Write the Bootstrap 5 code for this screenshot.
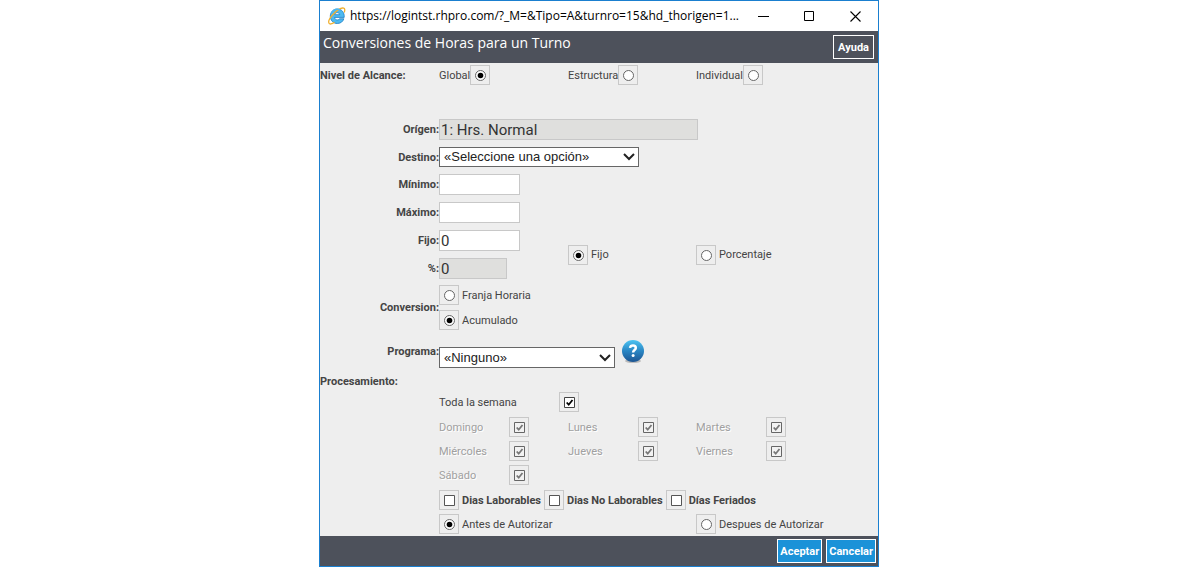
<!DOCTYPE html>
<html lang="es">
<head>
<meta charset="utf-8">
<meta name="viewport" content="width=device-width, initial-scale=1">
<title>Conversiones de Horas para un Turno</title>
<link href="https://cdn.jsdelivr.net/npm/bootstrap@5.3.0/dist/css/bootstrap.min.css" rel="stylesheet">
<style>
  body { padding-right: 2px; font-family: Roboto, "Open Sans", sans-serif; font-size: 11px; line-height: 16px; color: #444; background: #fff; }
  .dialog-window { max-width: 560px; border: 1px solid #1a7fcf; background: #eee; }
  .window-bar { height: 30px; padding-left: 8px; background: #fff; color: #000; font: 12px/30px "Open Sans", sans-serif; }
  .window-bar svg { display: block; }
  .window-btn { width: 46px; height: 28px; padding: 0; border: 0; background: none; display: flex; align-items: center; justify-content: center; }
  .bar-dark { background: #4d515b; color: #fff; }
  .bar-top { padding: 0 4px 0 3px; height: 32px; }
  .bar-top h1 { margin: 0; font: 14px/24px "Open Sans", sans-serif; }
  .bar-bottom { padding: 3px 2px; height: 30px; gap: 4px; }
  .tool-btn { height: 24px; padding: 2px 4px 0; border: 1px solid #fff; border-radius: 0; color: #fff; font: 700 11px/20px Roboto, sans-serif; background: transparent; }
  .tool-btn.main-btn { padding: 2px 2px 0; background: #1b92d8; }
  .tool-btn:hover { background: #137ab8; color: #fff; }

  form { padding-bottom: 2px; }
  .line { display: grid; grid-template-columns: 119px 129px 128px 1fr; align-items: center; min-height: 20px; }
  .line > .wide { grid-column: 2 / -1; }
  .two-cols { grid-column: span 2; }
  .scope { margin: 2px 0 34px; }
  .stack { display: grid; row-gap: 7px; }
  .days { row-gap: 4px; }
  .days + .days { margin-top: 5px; }
  .tick-group { gap: 3px; }
  label, .lead-label, .section-label { padding-top: 1px; }
  .lead-label { font-weight: 700; text-align: right; }
  .section-label { font-weight: 700; text-align: left; }
  .amount-label { width: 119px; }
  .amount-mode { width: 128px; }
  .amount-mode:nth-child(2) { margin-left: 48px; }
  .conversion { margin-top: 6px; }
  .conversion .wide { row-gap: 5px; }
  .program { margin-top: 10px; }
  .program .wide { gap: 6px; height: 28px; }
  .processing { margin-top: 4px; line-height: 18px; height: 18px; }
  .week { margin: 2px 0 5px; }

  .tick { appearance: none; flex: none; display: block; width: 20px; height: 20px; margin: 0; border: 1px solid #c8c8c8; background: center / 18px 18px no-repeat; }
  .tick[type=radio] { background-image: url("data:image/svg+xml,%3Csvg xmlns='http://www.w3.org/2000/svg' viewBox='0 0 18 18'%3E%3Ccircle cx='9.500' cy='9.500' r='5' fill='%23fff' stroke='%23666'/%3E%3C/svg%3E"); }
  .tick[type=radio]:checked { background-image: url("data:image/svg+xml,%3Csvg xmlns='http://www.w3.org/2000/svg' viewBox='0 0 18 18'%3E%3Ccircle cx='9.500' cy='9.500' r='5' fill='%23fff' stroke='%23666'/%3E%3Ccircle cx='9.500' cy='9.500' r='2.800' fill='%23000'/%3E%3C/svg%3E"); }
  .tick[type=checkbox] { background-image: url("data:image/svg+xml,%3Csvg xmlns='http://www.w3.org/2000/svg' viewBox='0 0 18 18'%3E%3Cpath d='M4.500 4.500h10v10h-10z' fill='%23fff' stroke='%23555'/%3E%3C/svg%3E"); }
  .tick[type=checkbox]:checked { background-image: url("data:image/svg+xml,%3Csvg xmlns='http://www.w3.org/2000/svg' viewBox='0 0 18 18'%3E%3Cpath d='M4.500 4.500h10v10h-10z' fill='%23fff' stroke='%23444'/%3E%3Cpath d='M6.700 9.500l2 2.200 3.800-4.700' fill='none' stroke='%23000' stroke-width='1.800'/%3E%3C/svg%3E"); }
  .tick[type=checkbox]:disabled { background-image: url("data:image/svg+xml,%3Csvg xmlns='http://www.w3.org/2000/svg' viewBox='0 0 18 18'%3E%3Cpath d='M4.500 4.500h10v10h-10z' fill='%23f2f2f2' stroke='%23666'/%3E%3Cpath d='M6.700 9.500l2 2.200 3.800-4.700' fill='none' stroke='%23777' stroke-width='1.800'/%3E%3C/svg%3E"); }
  .day-label { width: 70px; color: #a0a0a0; text-shadow: 1px 1px 0 #fff; }
  .week-label { width: 120px; }

  .entry { height: 21px; min-height: 0; width: 81px; padding: 0 1px; border: 1px solid #c8c8c8; border-radius: 0; color: #333; font: 15px/19px Roboto, sans-serif; background: #fff; }
  .entry:disabled { background: #dfdfdd; color: #333; opacity: 1; }
  .entry-origin { width: 259px; }
  .entry-percent { width: 68px; }
  .picker { height: 20px; padding: 0 20px 0 4px; border: 1px solid #666; border-radius: 0; color: #222; font: 13px/18px "Liberation Sans", sans-serif; background: #fff url("data:image/svg+xml,%3Csvg xmlns='http://www.w3.org/2000/svg' viewBox='0 0 12 8'%3E%3Cpath d='M1 1l5 5 5-5' fill='none' stroke='%23222' stroke-width='2'/%3E%3C/svg%3E") right 3px center / 12px 8px no-repeat; }
  .picker-target { width: 200px; }
  .picker-program { width: 176px; height: 21px; line-height: 19px; }
  .help-btn { width: 24px; height: 24px; padding: 0; border: 0; background: none; }
  .help-btn svg { display: block; }
</style>
</head>
<body>
<main class="dialog-window mx-auto">
  <header class="window-bar d-flex align-items-center">
    <svg width="18" height="18" viewBox="0 0 18 18" aria-hidden="true">
      <path d="M9.300 2C5.200 2 2.300 5.200 2.300 9.200c0 4.200 3 7.300 7 7.300 3.200 0 5.600-1.800 6.600-4.700h-4.300c-.5.700-1.200 1.100-2.200 1.100-1.600 0-2.700-1-2.800-2.500h9.600C16.600 5.400 13.600 2 9.300 2zM6.700 7.700C7 6.400 7.900 5.600 9.200 5.600s2.300.8 2.500 2.100z" fill="#4db9f0" stroke="#1c7cc4" stroke-width=".8"/>
      <path d="M6.500 15.200C3.800 17.200 1.700 17.500 1 16.200.1 14.500 1.800 10.900 5 7.500 8.900 3.300 13.600.400 15.700 1.200c1.400.5 1.300 2.400.5 4.300" fill="none" stroke="#f0b030" stroke-width="1.300"/>
      <path d="M3.300 6.500C4.400 3.800 6.600 2.200 9.300 2.200c1 0 1.900.2 2.700.5" fill="none" stroke="#4db9f0" stroke-width="1.200"/>
    </svg>
    <span class="ms-1 me-auto text-nowrap overflow-hidden">https://logintst.rhpro.com/?_M=&amp;Tipo=A&amp;turnro=15&amp;hd_thorigen=1...</span>
    <button class="window-btn" type="button" aria-label="Minimizar"><svg width="11" height="11"><path d="M0 5.500h11" stroke="#000"/></svg></button>
    <button class="window-btn" type="button" aria-label="Maximizar"><svg width="11" height="11"><path d="M.5.500h9v9h-9z" fill="none" stroke="#000"/></svg></button>
    <button class="window-btn" type="button" aria-label="Cerrar"><svg width="11" height="11"><path d="M.5.500l10 10M10.500.500l-10 10" stroke="#000" stroke-width="1.100"/></svg></button>
  </header>

  <div class="bar-dark bar-top d-flex justify-content-between">
    <h1>Conversiones de Horas para un Turno</h1>
    <button class="btn tool-btn align-self-center" type="button">Ayuda</button>
  </div>

  <form>
    <div class="line scope" role="radiogroup" aria-label="Nivel de Alcance">
      <span class="section-label">Nivel de Alcance:</span>
      <div class="d-flex align-items-center"><label for="global">Global</label><input class="tick" type="radio" name="alcance" id="global" checked></div>
      <div class="d-flex align-items-center"><label for="estructura">Estructura</label><input class="tick" type="radio" name="alcance" id="estructura"></div>
      <div class="d-flex align-items-center"><label for="individual">Individual</label><input class="tick" type="radio" name="alcance" id="individual"></div>
    </div>

    <div class="stack">
      <div class="line"><label class="lead-label" for="origen">Orígen:</label><div class="wide"><input class="form-control entry entry-origin" id="origen" value="1: Hrs. Normal" disabled></div></div>
      <div class="line"><label class="lead-label" for="destino">Destino:</label><div class="wide"><select class="form-select picker picker-target" id="destino"><option>«Seleccione una opción»</option></select></div></div>
      <div class="line"><label class="lead-label" for="minimo">Mínimo:</label><div class="wide"><input class="form-control entry" id="minimo"></div></div>
      <div class="line"><label class="lead-label" for="maximo">Máximo:</label><div class="wide"><input class="form-control entry" id="maximo"></div></div>
      <div class="d-flex align-items-center">
        <div class="stack">
          <div class="d-flex align-items-center"><label class="lead-label amount-label" for="fijo">Fijo:</label><input class="form-control entry" id="fijo" value="0"></div>
          <div class="d-flex align-items-center"><label class="lead-label amount-label" for="porciento">%:</label><input class="form-control entry entry-percent" id="porciento" value="0" disabled></div>
        </div>
        <div class="d-flex align-items-center tick-group amount-mode"><input class="tick" type="radio" name="modo" id="modo-fijo" checked><label for="modo-fijo">Fijo</label></div>
        <div class="d-flex align-items-center tick-group amount-mode"><input class="tick" type="radio" name="modo" id="modo-porc"><label for="modo-porc">Porcentaje</label></div>
      </div>
    </div>

    <div class="line conversion" role="radiogroup" aria-label="Conversion">
      <span class="lead-label">Conversion:</span>
      <div class="wide d-grid">
        <div class="d-flex align-items-center tick-group"><input class="tick" type="radio" name="conversion" id="franja"><label for="franja">Franja Horaria</label></div>
        <div class="d-flex align-items-center tick-group"><input class="tick" type="radio" name="conversion" id="acumulado" checked><label for="acumulado">Acumulado</label></div>
      </div>
    </div>

    <div class="line program">
      <label class="lead-label align-self-start pt-1" for="programa">Programa:</label>
      <div class="wide d-flex">
        <select class="form-select picker picker-program align-self-end" id="programa"><option>«Ninguno»</option></select>
        <button class="help-btn" type="button" aria-label="Ayuda sobre el programa">
          <svg width="24" height="24" viewBox="0 0 24 24">
            <defs><linearGradient id="orb" x1="0" y1="0" x2="0" y2="1"><stop offset="0" stop-color="#4cc4f2"/><stop offset=".5" stop-color="#2a86c4"/><stop offset="1" stop-color="#1d5592"/></linearGradient></defs>
            <ellipse cx="12" cy="21" rx="8" ry="2" fill="#bbb"/>
            <circle cx="12" cy="11" r="11" fill="url(#orb)"/>
            <path d="M9 7.900C9.300 6.200 10.500 5.500 12 5.500c1.700 0 2.800.9 2.800 2.400 0 2.100-2.700 2.100-2.700 4.600" fill="none" stroke="#fff" stroke-width="2.500"/>
            <circle cx="12.100" cy="15.600" r="1.500" fill="#fff"/>
          </svg>
        </button>
      </div>
    </div>

    <div class="section-label processing">Procesamiento:</div>

    <div class="line week"><span></span><div class="wide d-flex align-items-center"><label class="week-label" for="semana">Toda la semana</label><input class="tick" type="checkbox" id="semana" checked></div></div>

    <div class="stack days">
      <div class="line"><span></span>
        <div class="d-flex align-items-center"><label class="day-label" for="domingo">Domingo</label><input class="tick" type="checkbox" id="domingo" checked disabled></div>
        <div class="d-flex align-items-center"><label class="day-label" for="lunes">Lunes</label><input class="tick" type="checkbox" id="lunes" checked disabled></div>
        <div class="d-flex align-items-center"><label class="day-label" for="martes">Martes</label><input class="tick" type="checkbox" id="martes" checked disabled></div>
      </div>
      <div class="line"><span></span>
        <div class="d-flex align-items-center"><label class="day-label" for="miercoles">Miércoles</label><input class="tick" type="checkbox" id="miercoles" checked disabled></div>
        <div class="d-flex align-items-center"><label class="day-label" for="jueves">Jueves</label><input class="tick" type="checkbox" id="jueves" checked disabled></div>
        <div class="d-flex align-items-center"><label class="day-label" for="viernes">Viernes</label><input class="tick" type="checkbox" id="viernes" checked disabled></div>
      </div>
      <div class="line"><span></span>
        <div class="d-flex align-items-center"><label class="day-label" for="sabado">Sábado</label><input class="tick" type="checkbox" id="sabado" checked disabled></div>
      </div>
    </div>
    <div class="stack days">
      <div class="line"><span></span>
        <div class="wide d-flex align-items-center fw-bold tick-group">
          <input class="tick" type="checkbox" id="laborables"><label for="laborables">Dias Laborables</label>
          <input class="tick" type="checkbox" id="nolaborables"><label for="nolaborables">Dias No Laborables</label>
          <input class="tick" type="checkbox" id="feriados"><label for="feriados">Días Feriados</label>
        </div>
      </div>
      <div class="line"><span></span>
        <div class="two-cols d-flex align-items-center tick-group"><input class="tick" type="radio" name="autorizar" id="antes" checked><label for="antes">Antes de Autorizar</label></div>
        <div class="d-flex align-items-center tick-group"><input class="tick" type="radio" name="autorizar" id="despues"><label for="despues">Despues de Autorizar</label></div>
      </div>
    </div>
  </form>

  <footer class="bar-dark bar-bottom d-flex justify-content-end">
    <button class="btn tool-btn main-btn" type="button">Aceptar</button>
    <button class="btn tool-btn main-btn" type="button">Cancelar</button>
  </footer>
</main>
<script src="https://cdn.jsdelivr.net/npm/bootstrap@5.3.0/dist/js/bootstrap.bundle.min.js"></script>
</body>
</html>
